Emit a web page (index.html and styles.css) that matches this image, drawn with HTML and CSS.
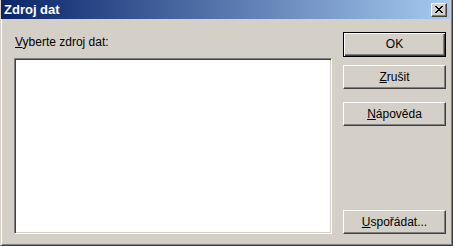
FILE: index.html
```html
<!DOCTYPE html>
<html lang="cs">
<head>
<meta charset="utf-8">
<title>Zdroj dat</title>
<link rel="stylesheet" href="styles.css">
</head>
<body>
<div class="window">
  <div class="titlebar">
    <span class="title">Zdroj dat</span>
    <span class="close">
      <svg width="8" height="7" viewBox="0 0 8 7" shape-rendering="crispEdges">
        <rect x="0" y="0" width="2" height="1"/><rect x="6" y="0" width="2" height="1"/>
        <rect x="1" y="1" width="2" height="1"/><rect x="5" y="1" width="2" height="1"/>
        <rect x="2" y="2" width="4" height="1"/>
        <rect x="3" y="3" width="2" height="1"/>
        <rect x="2" y="4" width="4" height="1"/>
        <rect x="1" y="5" width="2" height="1"/><rect x="5" y="5" width="2" height="1"/>
        <rect x="0" y="6" width="2" height="1"/><rect x="6" y="6" width="2" height="1"/>
      </svg>
    </span>
  </div>
  <div class="content">
    <div class="left">
      <div class="label"><u>V</u>yberte zdroj dat:</div>
      <div class="listbox"></div>
    </div>
    <div class="right">
      <div class="btn default">OK</div>
      <div class="btn gap1"><u>Z</u>rušit</div>
      <div class="btn gap2"><u>N</u>ápověda</div>
      <div class="spacer"></div>
      <div class="btn"><u>U</u>spořádat...</div>
    </div>
  </div>
</div>
</body>
</html>
```
FILE: styles.css
```css
html, body {
  margin: 0;
  padding: 0;
  background: #d4d0c8;
}
.window {
  width: 453px;
  height: 246px;
  box-sizing: border-box;
  background: #d4d0c8;
  border-left: 1px solid #d4d0c8;
  border-right: 1px solid #404040;
  border-bottom: 1px solid #404040;
  box-shadow: inset 1px 0 #ffffff, inset -1px -1px #808080;
  display: flex;
  flex-direction: column;
  font-family: "Liberation Sans", Arial, sans-serif;
  font-size: 12px;
  color: #000;
}
.titlebar {
  height: 19px;
  margin: 0 2px 0 0;
  background: linear-gradient(to right, #0a246a 0%, #a6caf0 100%);
  display: flex;
  align-items: center;
  justify-content: space-between;
  padding: 0 3px 0 3px;
  flex: none;
}
.title {
  color: #fff;
  font-weight: bold;
  font-size: 13px;
}
.close {
  width: 16px;
  height: 14px;
  box-sizing: border-box;
  background: #d4d0c8;
  border-top: 1px solid #fff;
  border-left: 1px solid #fff;
  border-right: 1px solid #404040;
  border-bottom: 1px solid #404040;
  box-shadow: inset -1px -1px #808080;
  display: flex;
  align-items: center;
  justify-content: center;
  padding: 0 1px 1px 0;
}
.close svg {
  display: block;
  fill: #000;
}
.content {
  flex: 1;
  display: flex;
  padding: 13px 0 12px 13px;
  gap: 11px;
}
.left {
  display: flex;
  flex-direction: column;
  width: 318px;
}
.label {
  margin-top: 3px;
  line-height: 14px;
  padding-left: 1px;
}
.listbox {
  margin-top: 9px;
  height: 176px;
  box-sizing: border-box;
  background: #fff;
  border-top: 1px solid #808080;
  border-left: 1px solid #808080;
  border-right: 1px solid #fff;
  border-bottom: 1px solid #fff;
  box-shadow: inset 1px 1px #404040, inset -1px -1px #d4d0c8;
}
.right {
  display: flex;
  flex-direction: column;
  width: 103px;
}
.btn {
  height: 24px;
  box-sizing: border-box;
  border-top: 1px solid #fff;
  border-left: 1px solid #fff;
  border-right: 1px solid #404040;
  border-bottom: 1px solid #404040;
  box-shadow: inset -1px -1px #808080;
  display: flex;
  align-items: center;
  justify-content: center;
  padding-bottom: 1px;
}
.btn.default {
  height: 25px;
  border: 1px solid #000;
  box-shadow: inset 1px 1px #fff, inset -1px -1px #404040, inset -2px -2px #808080;
}
.gap1 { margin-top: 8px; }
.gap2 { margin-top: 13px; }
.spacer { flex: 1; }
u { text-decoration: underline; text-underline-offset: 1px; }
```
